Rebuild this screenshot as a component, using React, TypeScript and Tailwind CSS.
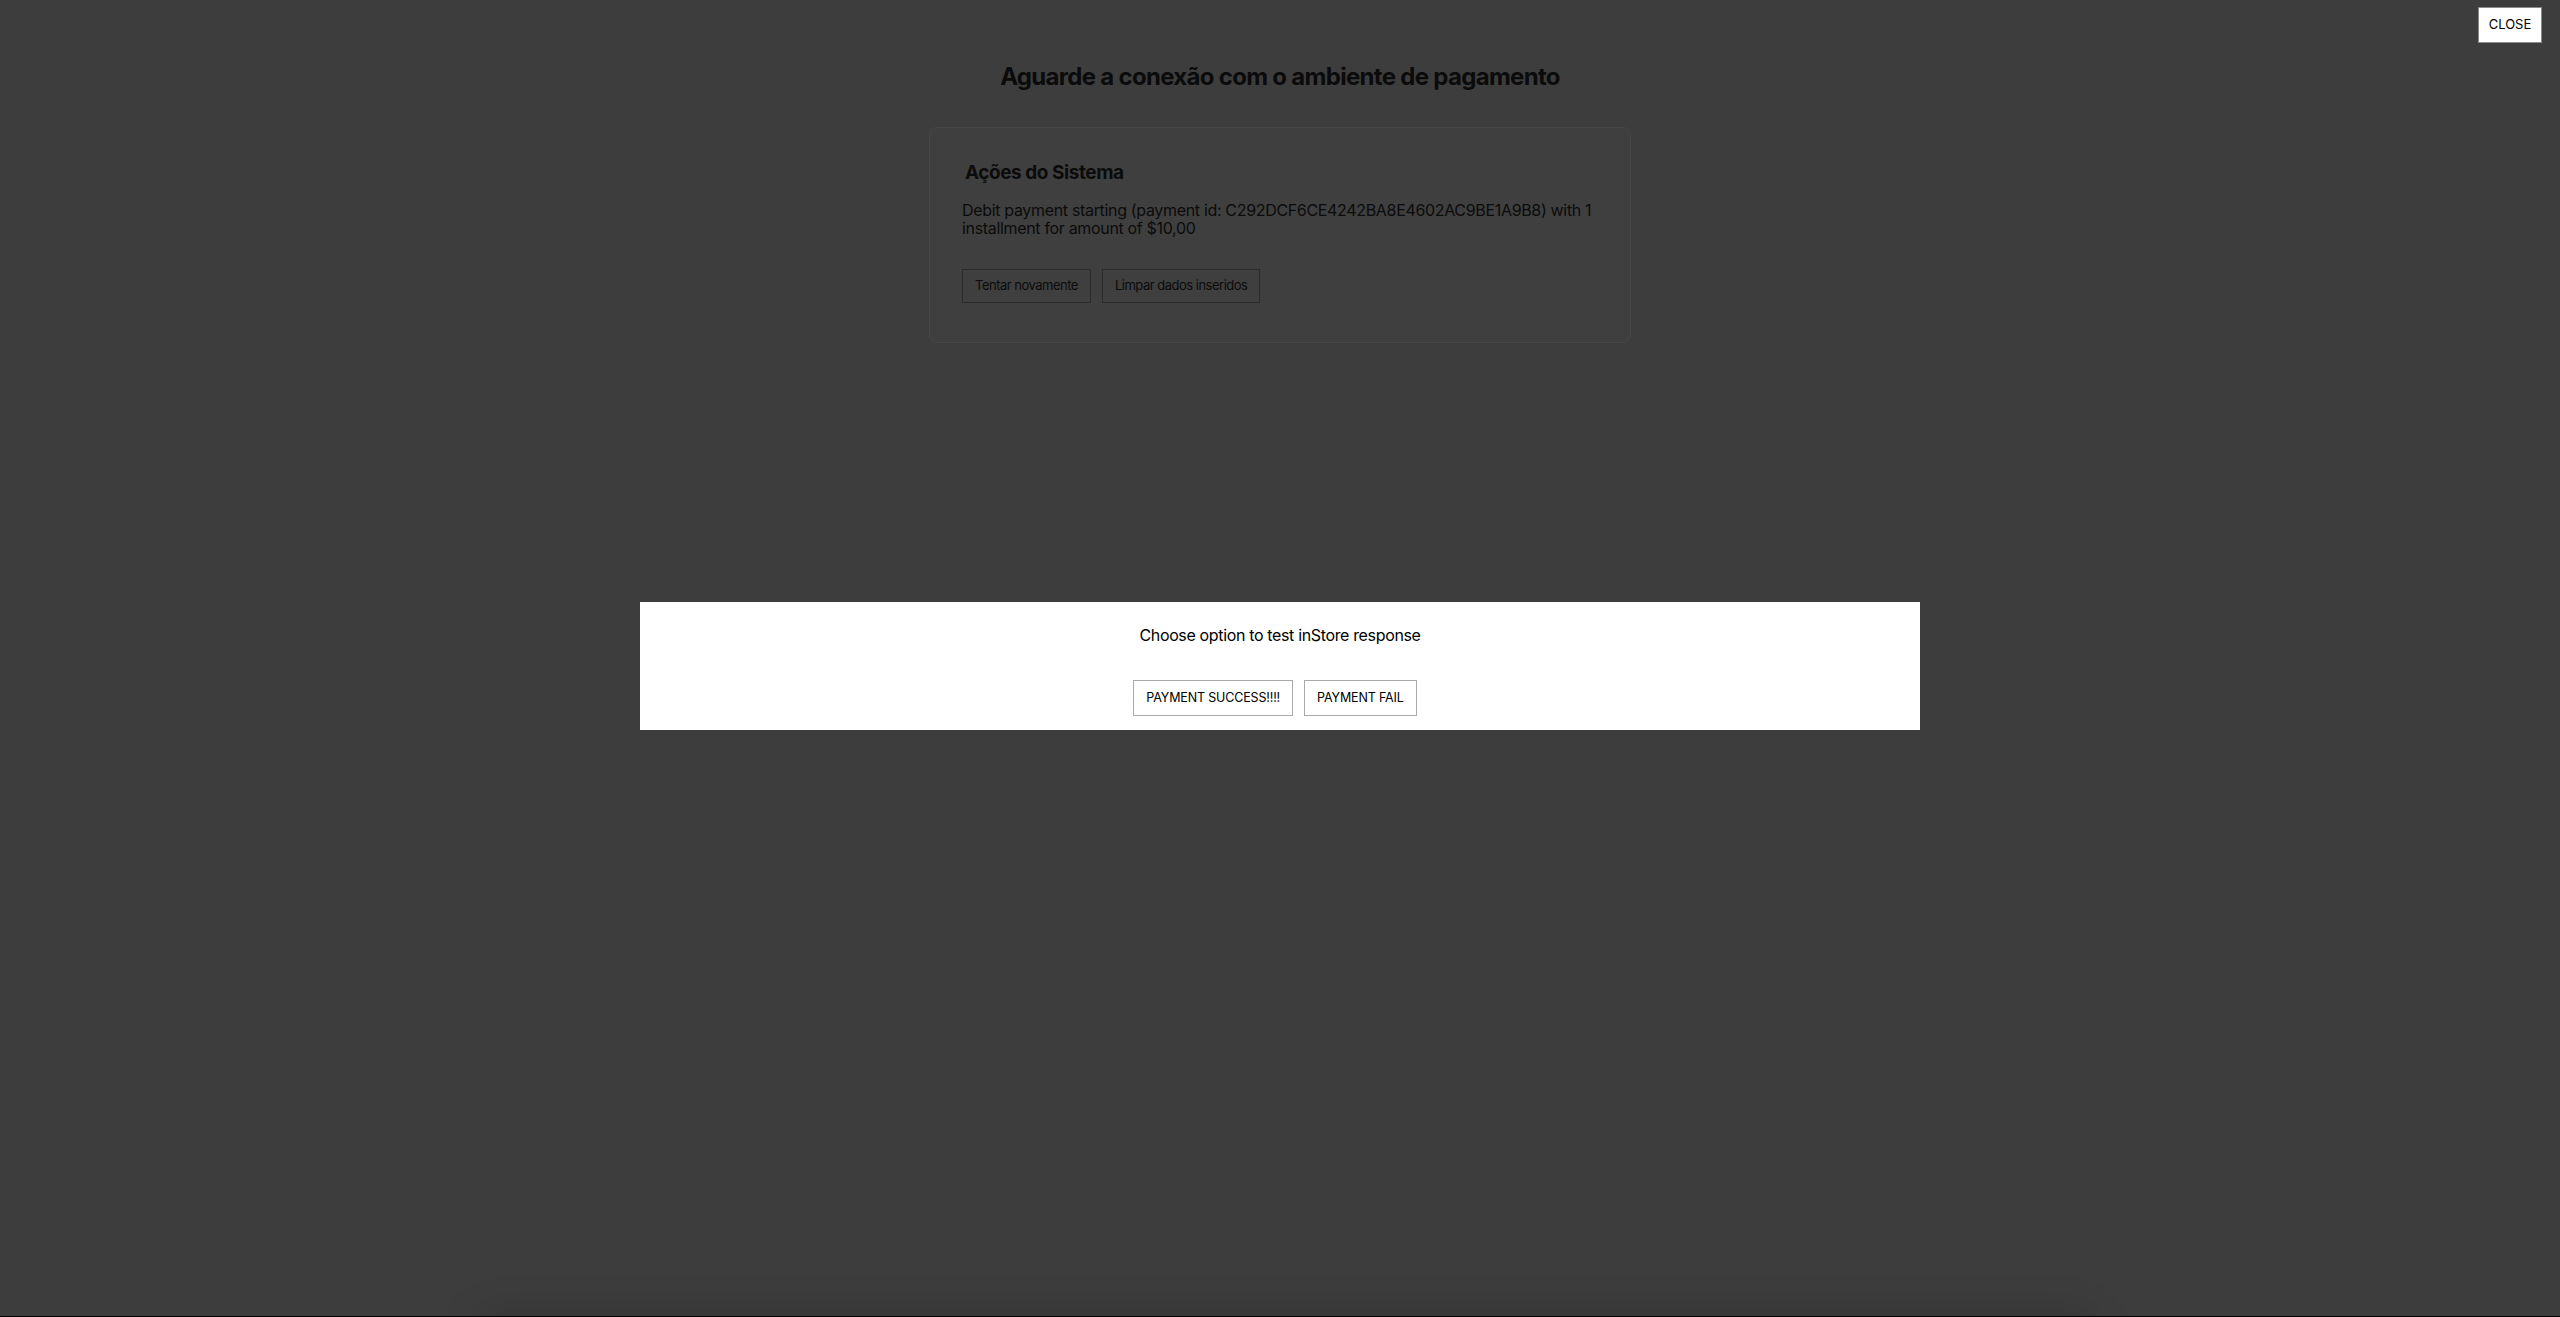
import React from "react";

const font = { fontFamily: "Inter, 'Liberation Sans', sans-serif" };

export default function App() {
  return (
    <div
      className="relative h-screen w-full overflow-hidden bg-[#3d3d3d] text-[#0b0b0b]"
      style={font}
    >
      {/* Page under the overlay */}
      <div className="flex flex-col items-center">
        <h1 className="mt-[61px] text-[24px] font-bold leading-8 tracking-[-0.7px]">
          Aguarde a conexão com o ambiente de pagamento
        </h1>

        <div className="mt-[34px] w-[702px] rounded-lg border border-[#474747] bg-[#3f3f3f] px-8 pt-[31px] pb-[39px]">
          <h2 className="pl-[3px] text-[19px] font-bold leading-7 tracking-[-0.45px]">Ações do Sistema</h2>
          <p className="mt-[14px] text-[16px] leading-[18px] tracking-[-0.33px]">
            Debit payment starting (payment id: C292DCF6CE4242BA8E4602AC9BE1A9B8) with 1 installment for amount of $10,00
          </p>
          <div className="mt-8 flex gap-[11px]">
            <button className="h-[34px] border border-[#2b2b2b] px-3 text-[13px] tracking-[-0.5px]">Tentar novamente</button>
            <button className="h-[34px] border border-[#2b2b2b] px-3 text-[13px] tracking-[-0.5px]">Limpar dados inseridos</button>
          </div>
        </div>
      </div>

      {/* Close button */}
      <button className="absolute top-[7px] right-[18px] h-9 w-16 border border-[#8a8a8a] bg-white text-[13px] text-black">
        CLOSE
      </button>

      {/* Test response dialog */}
      <div className="absolute top-[602px] left-[640px] flex h-32 w-[1280px] flex-col items-center bg-white text-black">
        <p className="mt-[23px] text-[16px] leading-5 tracking-[-0.35px]">Choose option to test inStore response</p>
        <div className="mt-[35px] flex pl-[1px]">
          <button className="mr-[11px] h-9 border border-[#a9a9a9] px-3 text-[12.5px] tracking-[-0.15px]">PAYMENT SUCCESS!!!!</button>
          <button className="mr-[11px] h-9 border border-[#a9a9a9] px-3 text-[12.5px] tracking-[-0.15px]">PAYMENT FAIL</button>
        </div>
      </div>

      {/* bottom bar shadow */}
      <div className="absolute top-[1317px] left-[473px] h-10 w-[1625px] rounded-t-3xl shadow-[0_-6px_40px_rgba(0,0,0,0.12)]" />
      <div className="absolute bottom-0 left-0 h-px w-full bg-black" />
    </div>
  );
}
